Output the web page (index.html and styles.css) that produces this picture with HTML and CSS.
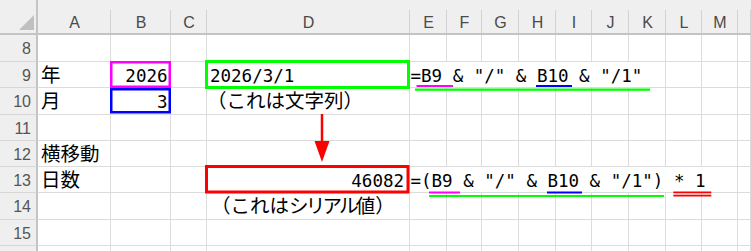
FILE: index.html
```html
<!DOCTYPE html>
<html lang="ja">
<head>
<meta charset="utf-8">
<title>Sheet</title>
<link rel="stylesheet" href="styles.css">
</head>
<body>
<div class="wrap">
  <div class="sheet">
    <div class="corner"><div class="tri"></div></div>
    <div class="ch">A</div><div class="ch">B</div><div class="ch">C</div><div class="ch">D</div>
    <div class="ch">E</div><div class="ch">F</div><div class="ch">G</div><div class="ch">H</div>
    <div class="ch">I</div><div class="ch">J</div><div class="ch">K</div><div class="ch">L</div>
    <div class="ch">M</div><div class="ch"></div>

    <div class="rh">8</div>
    <div class="c"></div><div class="c"></div><div class="c"></div><div class="c"></div><div class="c"></div><div class="c"></div><div class="c"></div><div class="c"></div><div class="c"></div><div class="c"></div><div class="c"></div><div class="c"></div><div class="c"></div><div class="c"></div>

    <div class="rh">9</div>
    <div class="c jp pad-a">年</div>
    <div class="c mono right">2026</div>
    <div class="c"></div>
    <div class="c mono pad-d">2026/3/1</div>
    <div class="c mono formula span7">=B9 &amp; "/" &amp; B10 &amp; "/1"</div>
    <div class="c"></div><div class="c"></div><div class="c"></div>

    <div class="rh">10</div>
    <div class="c jp pad-a">月</div>
    <div class="c mono right">3</div>
    <div class="c"></div>
    <div class="c jp note1">（これは文字列）</div>
    <div class="c"></div><div class="c"></div><div class="c"></div><div class="c"></div><div class="c"></div><div class="c"></div><div class="c"></div><div class="c"></div><div class="c"></div><div class="c"></div>

    <div class="rh">11</div>
    <div class="c"></div><div class="c"></div><div class="c"></div><div class="c"></div><div class="c"></div><div class="c"></div><div class="c"></div><div class="c"></div><div class="c"></div><div class="c"></div><div class="c"></div><div class="c"></div><div class="c"></div><div class="c"></div>

    <div class="rh">12</div>
    <div class="c jp pad-a">横移動</div>
    <div class="c"></div><div class="c"></div><div class="c"></div><div class="c"></div><div class="c"></div><div class="c"></div><div class="c"></div><div class="c"></div><div class="c"></div><div class="c"></div><div class="c"></div><div class="c"></div><div class="c"></div>

    <div class="rh">13</div>
    <div class="c jp pad-a">日数</div>
    <div class="c"></div>
    <div class="c"></div>
    <div class="c mono right wide">46082</div>
    <div class="c mono formula span9">=(B9 &amp; "/" &amp; B10 &amp; "/1") * 1</div>
    <div class="c"></div>

    <div class="rh">14</div>
    <div class="c"></div><div class="c"></div><div class="c"></div>
    <div class="c jp note2">（これは<span class="kata">シリアル</span>値）</div>
    <div class="c"></div><div class="c"></div><div class="c"></div><div class="c"></div><div class="c"></div><div class="c"></div><div class="c"></div><div class="c"></div><div class="c"></div><div class="c"></div>

    <div class="rh">15</div>
    <div class="c"></div><div class="c"></div><div class="c"></div><div class="c"></div><div class="c"></div><div class="c"></div><div class="c"></div><div class="c"></div><div class="c"></div><div class="c"></div><div class="c"></div><div class="c"></div><div class="c"></div><div class="c"></div>

    <div class="rh"></div>
    <div class="c"></div><div class="c"></div><div class="c"></div><div class="c"></div><div class="c"></div><div class="c"></div><div class="c"></div><div class="c"></div><div class="c"></div><div class="c"></div><div class="c"></div><div class="c"></div><div class="c"></div><div class="c"></div>
  </div>

  <svg class="marks" width="751" height="251" viewBox="0 0 751 251">
    <rect x="111.25" y="62.25" width="58.5" height="24.5" fill="none" stroke="#ff00ff" stroke-width="2.5"/>
    <rect x="111.25" y="89.25" width="58.5" height="23" fill="none" stroke="#0000ff" stroke-width="2.5"/>
    <rect x="206.5" y="61.5" width="202" height="26" fill="none" stroke="#00ff00" stroke-width="3"/>
    <rect x="206.5" y="166.5" width="201.5" height="25.5" fill="none" stroke="#ff0000" stroke-width="3"/>

    <line x1="322" y1="114" x2="322" y2="144" stroke="#ff0000" stroke-width="2.5"/>
    <polygon points="314.5,141 329.5,141 322,162" fill="#ff0000"/>

    <rect x="416.5" y="85" width="36.5" height="2" fill="#ff00ff"/>
    <rect x="536" y="85" width="36" height="2" fill="#0000ff"/>
    <rect x="415" y="88.5" width="235" height="2.3" fill="#00ff00"/>

    <rect x="429" y="191.5" width="31" height="2" fill="#ff00ff"/>
    <rect x="547" y="191.5" width="35" height="2" fill="#0000ff"/>
    <rect x="429" y="195" width="235" height="2" fill="#00ff00"/>
    <rect x="673.3" y="191.5" width="38" height="1.8" fill="#ff0000"/>
    <rect x="673.3" y="194.7" width="38" height="1.8" fill="#ff0000"/>
  </svg>
</div>
</body>
</html>
```
FILE: styles.css
```css
html, body {
  margin: 0;
  padding: 0;
  background: #ffffff;
}
body {
  width: 751px;
  height: 251px;
  overflow: hidden;
}
.wrap {
  position: relative;
  width: 751px;
  height: 251px;
  overflow: hidden;
}
.sheet {
  display: grid;
  grid-template-columns: 38px 73px 60px 36px 203px 37px 35px 37px 37px 36px 37px 37px 36px 36px 1fr;
  grid-template-rows: 35px 27px 26px 27px 26px 26px 26px 27px 26px 30px;
  width: 751px;
  font-family: "Liberation Sans", Arial, sans-serif;
}
.corner {
  background: #efefef;
  border-right: 2px solid #c4c4c4;
  border-bottom: 2px solid #c4c4c4;
  display: flex;
  justify-content: flex-end;
  align-items: flex-end;
  padding: 0 2px 3px 0;
}
.tri {
  width: 15px;
  height: 15px;
  background: #c0c0c0;
  clip-path: polygon(100% 0, 100% 100%, 0 100%);
}
.ch {
  background: linear-gradient(#d2d2d2, #d2d2d2) no-repeat right bottom / 1px 23px, #efefef;
  border-bottom: 2px solid #c4c4c4;
  color: #4a4a4a;
  font-size: 16px;
  line-height: 24px;
  padding-top: 11px;
  text-align: center;
  box-sizing: border-box;
}
.rh {
  background: #efefef;
  border-right: 2px solid #c4c4c4;
  border-bottom: 1px solid #d6d6d6;
  color: #555555;
  font-size: 16px;
  line-height: 24px;
  padding: 2px 5px 0 0;
  text-align: right;
  box-sizing: border-box;
  overflow: hidden;
}
.c {
  background: #ffffff;
  border-right: 1px solid #dcdcdc;
  border-bottom: 1px solid #dcdcdc;
  box-sizing: border-box;
  white-space: nowrap;
  overflow: visible;
  color: #000000;
}
.mono {
  font-family: "DejaVu Sans Mono", "Liberation Mono", monospace;
  font-size: 17.5px;
  line-height: 24px;
  padding-top: 2px;
}
.jp {
  font-family: "Noto Sans CJK JP", sans-serif;
  font-size: 19.5px;
  line-height: 23px;
}
.right {
  text-align: right;
  padding-right: 2.5px;
}
.wide {
  padding-right: 5px;
}
.pad-a {
  padding-left: 3px;
}
.pad-d {
  padding-left: 3px;
}
.formula {
  padding-left: 0.5px;
}
.span7 {
  grid-column: span 7;
}
.span9 {
  grid-column: span 9;
}
.note1 {
  padding-left: 0;
}
.note2 {
  padding-left: 4px;
}
.kata {
  letter-spacing: -2.8px;
}
.marks {
  position: absolute;
  left: 0;
  top: 0;
  pointer-events: none;
}
```
